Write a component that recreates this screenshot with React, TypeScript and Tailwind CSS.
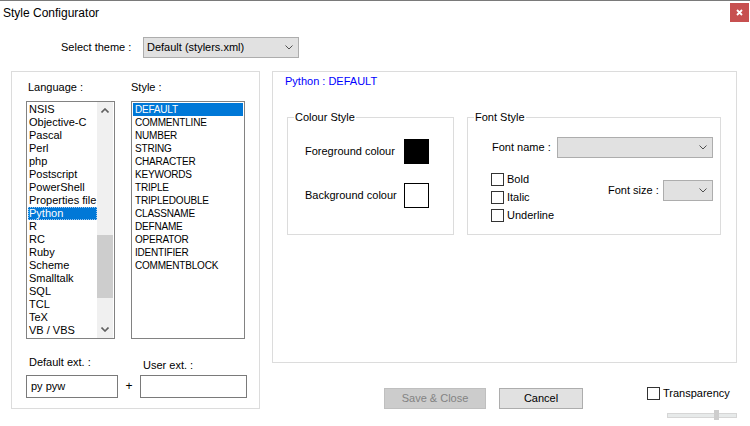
import React from "react";

const LANGUAGES = [
  "NSIS", "Objective-C", "Pascal", "Perl", "php", "Postscript", "PowerShell", "Properties file",
  "Python", "R", "RC", "Ruby", "Scheme", "Smalltalk", "SQL", "TCL", "TeX", "VB / VBS",
];
const STYLES = [
  "DEFAULT", "COMMENTLINE", "NUMBER", "STRING", "CHARACTER", "KEYWORDS", "TRIPLE",
  "TRIPLEDOUBLE", "CLASSNAME", "DEFNAME", "OPERATOR", "IDENTIFIER", "COMMENTBLOCK",
];

function Chevron({ up, bold, className }: { up?: boolean; bold?: boolean; className?: string }) {
  return (
    <svg width="8" height="5" viewBox="0 0 8 5" className={className}>
      <path
        d={up ? "M0.5 4.5 L4 1 L7.5 4.5" : "M0.5 0.5 L4 4 L7.5 0.5"}
        fill="none"
        stroke="currentColor"
        strokeWidth={bold ? 1.6 : 1}
      />
    </svg>
  );
}

function Combo({ value, className }: { value?: string; className?: string }) {
  return (
    <div className={`flex items-center justify-between h-[21px] bg-[#e1e1e1] border border-[#adadad] pl-[3px] pr-[5px] ${className ?? ""}`}>
      <span className="whitespace-nowrap">{value}</span>
      <Chevron className="text-[#505050]" />
    </div>
  );
}

function Check({ label }: { label: string }) {
  return (
    <div className="flex items-center gap-[3px] h-[13px]">
      <span className="w-[13px] h-[13px] border border-[#333333] bg-white shrink-0" />
      <span className="whitespace-nowrap">{label}</span>
    </div>
  );
}

function GroupBox({ title, className, children }: { title: string; className?: string; children: React.ReactNode }) {
  return (
    <div className={`relative h-[118px] border border-[#dcdcdc] ${className ?? ""}`}>
      <span className="absolute -top-[7px] left-[6px] px-[1px] bg-white whitespace-nowrap">{title}</span>
      {children}
    </div>
  );
}

export default function App() {
  return (
    <div className="w-[750px] h-[426px] overflow-hidden bg-white border-t border-[#7a7a7a] text-[11px] leading-[13px] text-black font-['Liberation_Sans',Arial,sans-serif]">
      {/* title bar */}
      <div className="flex justify-between h-[36px]">
        <span className="pt-[4px] pl-[3px] text-[12px] leading-[16px]">Style Configurator</span>
        <button className="mt-[2px] mr-[1px] w-[19px] h-[19px] bg-[#c75050] flex items-center justify-center">
          <svg width="7" height="7" viewBox="0 0 7 7">
            <path d="M1 1 L6 6 M6 1 L1 6" stroke="white" strokeWidth="1.8" />
          </svg>
        </button>
      </div>

      {/* theme */}
      <div className="flex items-center h-[21px]">
        <span className="ml-[61px] w-[82px]">Select theme :</span>
        <Combo className="w-[156px]" value="Default (stylers.xml)" />
      </div>

      <div className="flex mt-[13px]">
        {/* left panel */}
        <div className="ml-[11px] w-[249px] h-[338px] border border-[#dcdcdc] pl-[14px] pt-[9px] flex flex-col">
          <div className="flex gap-[16px]">
            <div className="w-[89px] flex flex-col">
              <div className="pl-[2px] h-[13px]">Language :</div>
              <div className="mt-[7px] h-[238px] border border-[#828282] flex">
                <div className="flex-1 pt-[1px] pl-[1px] overflow-hidden">
                  {LANGUAGES.map(l => (
                    <div
                      key={l}
                      className={`h-[13px] pl-[1px] whitespace-nowrap ${l === "Python" ? "bg-[#0078d7] text-white outline outline-1 outline-dotted -outline-offset-1 outline-[#9fc7ef]" : ""}`}
                    >
                      {l}
                    </div>
                  ))}
                </div>
                <div className="w-[16px] mr-[1px] bg-[#f0f0f0] flex flex-col">
                  <div className="h-[17px] flex items-center justify-center text-[#606060]">
                    <Chevron up bold />
                  </div>
                  <div className="flex-1">
                    <div className="mt-[116px] h-[63px] bg-[#cdcdcd]" />
                  </div>
                  <div className="h-[17px] flex items-center justify-center text-[#606060]">
                    <Chevron bold />
                  </div>
                </div>
              </div>
            </div>
            <div className="w-[114px] flex flex-col">
              <div className="h-[13px]">Style :</div>
              <div className="mt-[7px] h-[238px] border border-[#828282] pt-[1px] px-[1px] text-[10px] tracking-[-0.2px]">
                {STYLES.map(s => (
                  <div key={s} className={`h-[13px] pl-[2px] whitespace-nowrap ${s === "DEFAULT" ? "bg-[#0078d7] text-white" : ""}`}>
                    {s}
                  </div>
                ))}
              </div>
            </div>
          </div>

          <div className="flex items-start mt-[17px]">
            <div className="w-[92px] flex flex-col">
              <div className="pl-[3px] h-[13px]">Default ext. :</div>
              <div className="mt-[6px] h-[23px] border border-[#7a7a7a] pl-[4px] flex items-center">py pyw</div>
            </div>
            <div className="w-[22px] mt-[19px] h-[23px] flex items-center justify-center text-[12px]">+</div>
            <div className="w-[107px] flex flex-col">
              <div className="pl-[3px] pt-[3px] h-[16px]">User ext. :</div>
              <div className="mt-[3px] h-[23px] border border-[#7a7a7a]" />
            </div>
          </div>
        </div>

        {/* right column */}
        <div className="ml-[12px] w-[465px] flex flex-col">
          <div className="h-[292px] border border-[#dcdcdc] pt-[3px]">
            <div className="pl-[12px] h-[13px] text-[#0000ff]">Python : DEFAULT</div>
            <div className="flex gap-[13px] ml-[14px] mt-[29px]">
              <GroupBox title="Colour Style" className="w-[167px]">
                <div className="pt-[21px] pl-[17px] flex flex-col gap-[19px]">
                  <div className="flex items-center h-[25px]">
                    <span className="w-[99px]">Foreground colour</span>
                    <span className="w-[25px] h-[25px] bg-black" />
                  </div>
                  <div className="flex items-center h-[25px]">
                    <span className="w-[99px]">Background colour</span>
                    <span className="w-[25px] h-[25px] bg-white border border-black" />
                  </div>
                </div>
              </GroupBox>
              <GroupBox title="Font Style" className="w-[254px]">
                <div className="pt-[19px] pr-[7px]">
                  <div className="flex items-center pl-[24px]">
                    <span className="w-[65px]">Font name :</span>
                    <Combo className="w-[156px]" />
                  </div>
                  <div className="flex items-start mt-[15px] pl-[23px]">
                    <div className="flex flex-col gap-[5px]">
                      <Check label="Bold" />
                      <Check label="Italic" />
                      <Check label="Underline" />
                    </div>
                    <div className="ml-auto mt-[7px] flex items-center">
                      <span className="w-[55px]">Font size :</span>
                      <Combo className="w-[50px]" />
                    </div>
                  </div>
                </div>
              </GroupBox>
            </div>
          </div>

          <div className="flex items-start mt-[24px]">
            <button className="ml-[112px] mt-[1px] w-[102px] h-[21px] bg-[#cccccc] border border-[#bfbfbf] text-[#838383] flex items-center justify-center">
              Save &amp; Close
            </button>
            <button className="ml-[13px] mt-[1px] w-[84px] h-[21px] bg-[#e1e1e1] border border-[#adadad] flex items-center justify-center">
              Cancel
            </button>
            <div className="ml-[64px] flex flex-col">
              <Check label="Transparency" />
              <div className="ml-[20px] mt-[10px] relative w-[70px] h-[10px]">
                <div className="mt-[3px] h-[5px] bg-[#e7eaea] border border-[#d6d6d6]" />
                <div className="absolute left-[47px] top-0 w-[5px] h-[10px] bg-[#cdcdcd]" />
              </div>
            </div>
          </div>
        </div>
      </div>
    </div>
  );
}
